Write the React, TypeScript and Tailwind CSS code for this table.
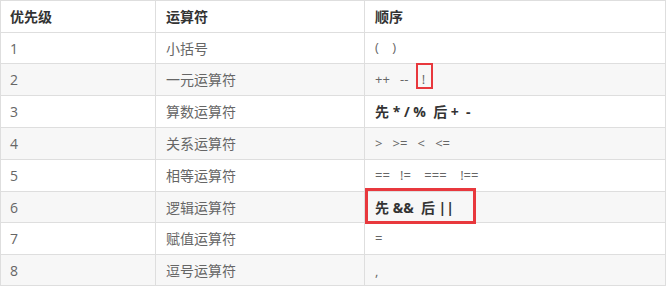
import React from "react";

type Row = { p: string; name: string; order: string; bold?: boolean; h: string; gray: boolean };

const rows: Row[] = [
  { p: "1", name: "小括号", order: "(    )", h: "h-[31px]", gray: false },
  { p: "2", name: "一元运算符", order: "++   --    !", h: "h-[32px]", gray: true },
  { p: "3", name: "算数运算符", order: "先 * / %  后 +  -", bold: true, h: "h-[32px]", gray: false },
  { p: "4", name: "关系运算符", order: ">   >=   <   <=", h: "h-[32px]", gray: true },
  { p: "5", name: "相等运算符", order: "==   !=    ===    !==", h: "h-[32px]", gray: false },
  { p: "6", name: "逻辑运算符", order: "先 &&  后 ||", bold: true, h: "h-[31px]", gray: true },
  { p: "7", name: "赋值运算符", order: "=", h: "h-[32px]", gray: false },
  { p: "8", name: "逗号运算符", order: ",", h: "h-[31px]", gray: true },
];

const font = { fontFamily: '"Open Sans", "Noto Sans CJK SC", sans-serif' };

export default function App() {
  return (
    <div className="w-[668px] h-[287px] bg-white" style={font}>
      <div className="relative w-[666px] border-l border-t border-[#dedede]">
        <div className="grid grid-cols-[155px_209px_301px] h-[32px] border-b border-[#dedede] text-[14px] font-bold text-[#333]">
          <div className="flex items-center pl-[9px] border-r border-[#dedede]">优先级</div>
          <div className="flex items-center pl-[10px] border-r border-[#dedede]">运算符</div>
          <div className="flex items-center pl-[10px] border-r border-[#dedede]">顺序</div>
        </div>
        {rows.map((r) => (
          <div
            key={r.p}
            className={`grid grid-cols-[155px_209px_301px] border-b border-[#dedede] text-[14px] text-[#666] ${r.h} ${r.gray ? "bg-[#f7f7f7]" : "bg-white"}`}
          >
            <div className="flex items-center pl-[9px] border-r border-[#dedede]">{r.p}</div>
            <div className="flex items-center pl-[10px] border-r border-[#dedede]">{r.name}</div>
            <div
              className={`relative flex items-center pl-[10px] border-r border-[#dedede] whitespace-pre ${
                r.bold ? "font-bold text-[#333]" : "text-[13px]"
              } ${r.p === "8" ? "pt-[3px]" : ""}`}
            >
              {r.order}
              {r.p === "2" && (
                <span className="absolute left-[51px] top-[-1px] w-[17px] h-[26px] border-2 border-[#e8383d]" />
              )}
              {r.p === "6" && (
                <span className="absolute left-0 top-[-4px] w-[111px] h-[36px] border-[3px] border-[#e8383d]" />
              )}
            </div>
          </div>
        ))}
      </div>
    </div>
  );
}
